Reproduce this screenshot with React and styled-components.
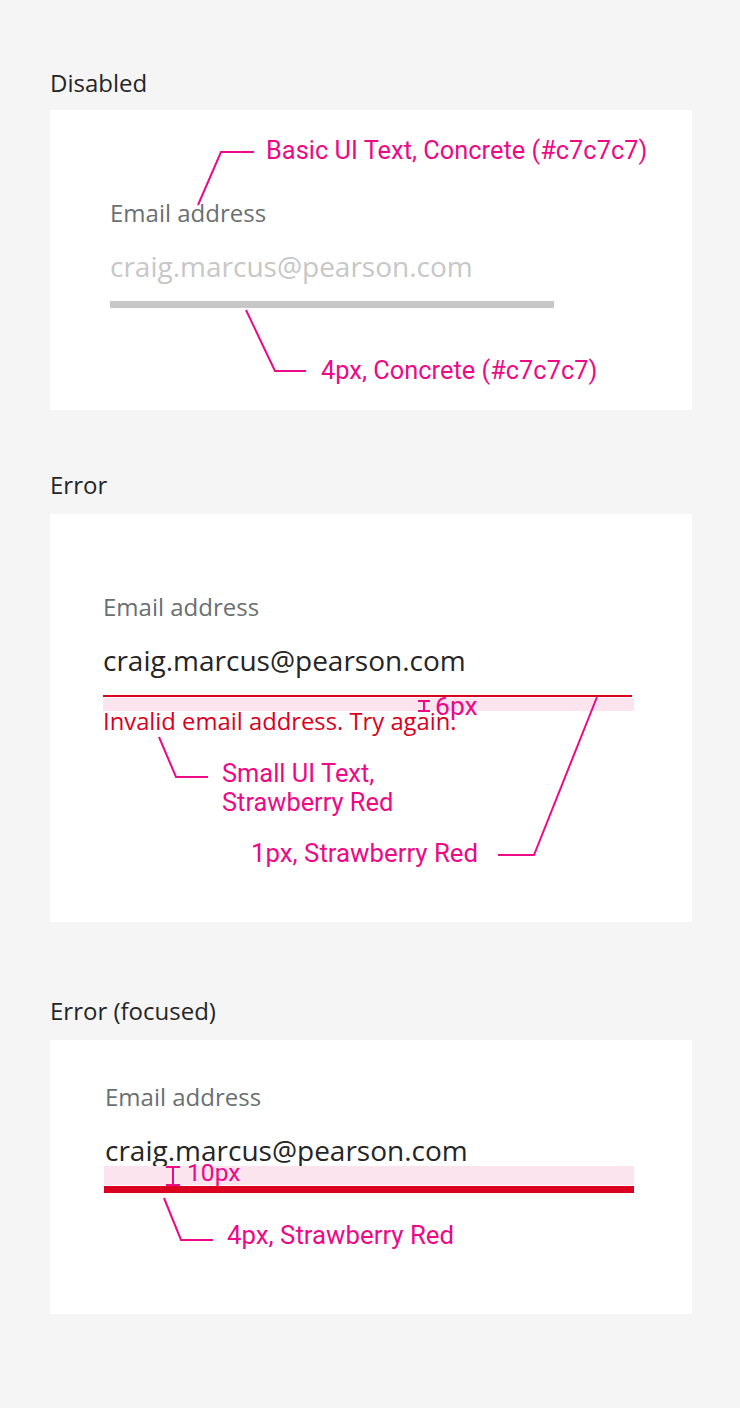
import React from 'react';
import styled, { createGlobalStyle } from 'styled-components';

const GlobalStyle = createGlobalStyle`
  html, body {
    margin: 0;
    padding: 0;
    background: #f5f5f5;
  }
  body {
    font-family: "Open Sans", "Liberation Sans", sans-serif;
    -webkit-font-smoothing: antialiased;
  }
`;

const PINK = '#ec0a86';
const RED = '#db0020';

const Page = styled.main`
  width: 740px;
  padding: 69px 48px 94px 50px;
  box-sizing: border-box;
  display: flex;
  flex-direction: column;
`;

const Section = styled.section`
  display: flex;
  flex-direction: column;
  margin-top: ${p => p.$top || 0}px;
`;

const Heading = styled.h2`
  margin: 0 0 ${p => p.$gap || 14}px;
  font-size: 24px;
  line-height: 28px;
  font-weight: 400;
  color: #252525;
`;

const Card = styled.div`
  position: relative;
  width: 642px;
  height: ${p => p.$height}px;
  box-sizing: border-box;
  background: #fff;
  padding: ${p => p.$padTop}px 0 0 ${p => p.$padLeft}px;
`;

const Field = styled.div`
  display: flex;
  flex-direction: column;
  align-items: flex-start;
`;

const Label = styled.div`
  font-size: 24px;
  line-height: 28px;
  color: #6a7070;
  margin-bottom: 23px;
`;

const Value = styled.div`
  font-size: 28px;
  line-height: 32px;
  color: ${p => (p.$disabled ? '#c7c7c7' : '#252525')};
  margin-bottom: ${p => p.$gap}px;
`;

const Underline = styled.div`
  width: ${p => p.$width}px;
  height: ${p => p.$thick}px;
  background: ${p => p.$color};
  margin-left: ${p => p.$shift || 0}px;
`;

const ErrorText = styled.div`
  margin-top: 11px;
  font-size: 23.8px;
  line-height: 26px;
  color: ${RED};
  position: relative;
  z-index: 1;
  white-space: nowrap;
`;

// redline annotations lie over the field
const Note = styled.div`
  position: absolute;
  left: ${p => p.$x}px;
  top: ${p => p.$y}px;
  font-family: Roboto, "Liberation Sans", sans-serif;
  font-size: ${p => p.$size || 25.4}px;
  line-height: 29px;
  color: ${PINK};
  white-space: nowrap;
  z-index: 3;
`;

const Band = styled.div`
  position: absolute;
  left: ${p => p.$x}px;
  top: ${p => p.$y}px;
  width: ${p => p.$w}px;
  height: ${p => p.$h}px;
  background: #fce4ef;
  z-index: 0;
`;

const Leaders = styled.svg`
  position: absolute;
  left: 0;
  top: 0;
  width: 642px;
  height: 100%;
  overflow: visible;
  pointer-events: none;
  z-index: 2;
`;

const Line = ({ points }) => (
  <polyline points={points} fill="none" stroke={PINK} strokeWidth="2" />
);

const Gauge = ({ x, top, bottom, w }) => (
  <g stroke={PINK} strokeWidth="2" fill="none">
    <line x1={x - w / 2} y1={top} x2={x + w / 2} y2={top} />
    <line x1={x} y1={top} x2={x} y2={bottom} />
    <line x1={x - w / 2} y1={bottom} x2={x + w / 2} y2={bottom} />
  </g>
);

const EMAIL = 'craig.marcus@pearson.com';

export default function App() {
  return (
    <>
      <GlobalStyle />
      <Page>
        <Section>
          <Heading $gap={13}>Disabled</Heading>
          <Card $height={300} $padTop={89} $padLeft={60}>
            <Field>
              <Label>Email address</Label>
              <Value $disabled $gap={19}>{EMAIL}</Value>
              <Underline $width={444} $thick={7} $color="#c7c7c7" />
            </Field>
            <Note $x={216} $y={26}>Basic UI Text, Concrete (#c7c7c7)</Note>
            <Note $x={271} $y={246}>4px, Concrete (#c7c7c7)</Note>
            <Leaders>
              <Line points="148,95 171,42 204,42" />
              <Line points="196,200 225,261 256,261" />
            </Leaders>
          </Card>
        </Section>

        <Section $top={61}>
          <Heading $gap={15}>Error</Heading>
          <Card $height={408} $padTop={79} $padLeft={53}>
            <Band $x={53} $y={184} $w={531} $h={13} />
            <Field>
              <Label>Email address</Label>
              <Value $gap={19}>{EMAIL}</Value>
              <Underline $width={529} $thick={2} $color={RED} />
              <ErrorText>Invalid email address. Try again.</ErrorText>
            </Field>
            <Note $x={385} $y={177} $size={26.5}>6px</Note>
            <Note $x={172} $y={245}>
              Small UI Text,
              <br />
              Strawberry Red
            </Note>
            <Note $x={201} $y={325} $size={25.8}>1px, Strawberry Red</Note>
            <Leaders>
              <Gauge x={374} top={187} bottom={197} w={12} />
              <Line points="109,223 126,263 158,263" />
              <Line points="448,341 484,341 547,183" />
            </Leaders>
          </Card>
        </Section>

        <Section $top={75}>
          <Heading $gap={15}>Error (focused)</Heading>
          <Card $height={274} $padTop={43} $padLeft={55}>
            <Band $x={54} $y={126} $w={530} $h={19} />
            <Field>
              <Label>Email address</Label>
              <Value $gap={20}>{EMAIL}</Value>
              <Underline $width={530} $thick={7} $color={RED} $shift={-1} />
            </Field>
            <Note $x={137} $y={118} $size={24.6}>10px</Note>
            <Note $x={177} $y={181} $size={25.8}>4px, Strawberry Red</Note>
            <Leaders>
              <Gauge x={123} top={127} bottom={145} w={14} />
              <Line points="114,158 131,200 163,200" />
            </Leaders>
          </Card>
        </Section>
      </Page>
    </>
  );
}
